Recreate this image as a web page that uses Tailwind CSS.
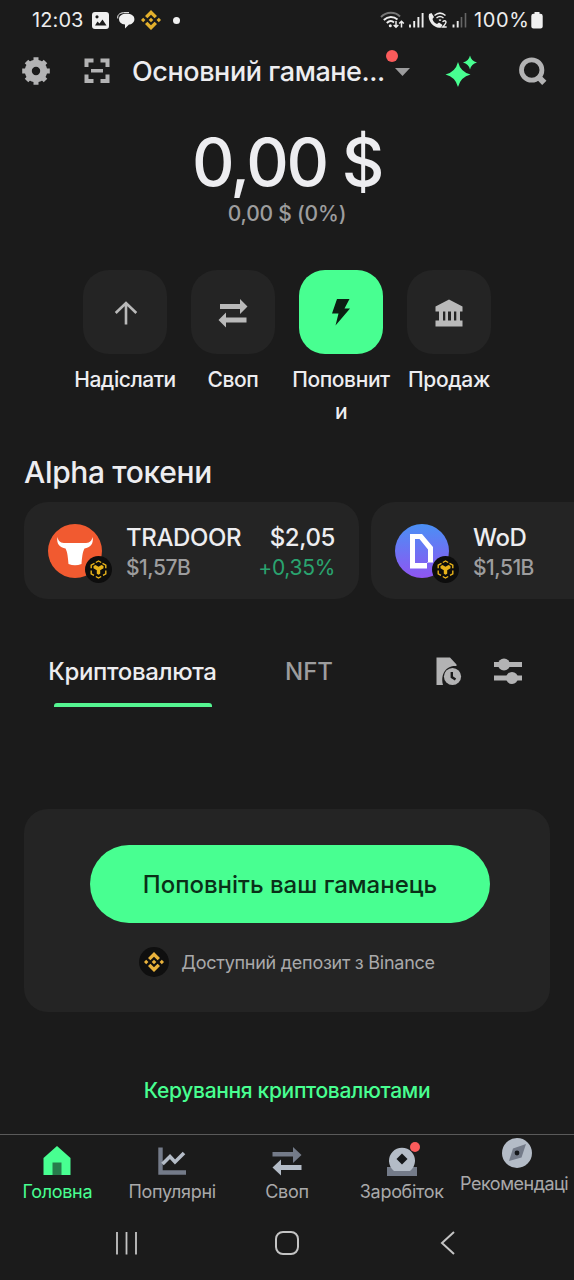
<!DOCTYPE html>
<html lang="uk">
<head>
<meta charset="utf-8">
<title>Гаманець</title>
<script src="https://cdn.jsdelivr.net/npm/@tailwindcss/browser@4"></script>
</head>
<body class="bg-[#1b1b1b]">
<svg class="hidden">
  <defs>
    <symbol id="bnb" viewBox="0 0 20 20"><path d="M10 0L16 6L13.6 8.3L10 4.7L6.4 8.3L4 6ZM10 20L4 14L6.4 11.7L10 15.3L13.6 11.7L16 14ZM0 10L2.2 7.8L4.4 10L2.2 12.2ZM15.6 10L17.8 7.8L20 10L17.8 12.2ZM7.7 10L10 7.7L12.3 10L10 12.3Z" fill="currentColor"/></symbol>
    <symbol id="chain" viewBox="0 0 27 27"><circle cx="13.5" cy="13.5" r="13.5" fill="#0d0d0d"/><g fill="none" stroke="#e8b31a" stroke-width="1.4"><path d="M10.800 6.500L13.500 5L16.200 6.500M17.500 7.300L20.800 9.200V12.200M20.800 14.500V17.800L18 19.400M16.200 20.500L13.500 22L10.800 20.500M9 19.400L6.200 17.800V14.500M6.200 12.200V9.200L9.500 7.300"/></g><path d="M8.500 10L10.500 8.900L13.500 10.700L16.500 8.900L18.500 10V12.300L15.200 14.300V17.800L13.500 18.800L11.800 17.800V14.300L8.500 12.300Z" fill="#e8b31a"/></symbol>
  </defs>
</svg>
<div class="flex h-[1280px] w-[574px] flex-col overflow-hidden bg-[#1b1b1b] font-['Inter',sans-serif] text-[#ededf0]">

  <!-- Status bar -->
  <div class="flex h-10 shrink-0 items-center justify-between pl-8 pr-[30px] text-[20px] text-[#ededed]">
    <div class="flex items-center">
      <span class="w-[60px] tracking-[0.1px]">12:03</span>
      <svg class="h-[17px] w-[17px]" viewBox="0 0 17 17"><path fill-rule="evenodd" fill="#f0f0f0" d="M3 0H14Q17 0 17 3V14Q17 17 14 17H3Q0 17 0 14V3Q0 0 3 0ZM3 13.500H14.500L10.500 7.500L7.500 11.500L5.500 9.500ZM5 3.200A1.600 1.600 0 1 0 5 6.400A1.600 1.600 0 1 0 5 3.200Z"/></svg>
      <svg class="ml-2 h-[17px] w-[18px]" viewBox="0 0 18 17"><path d="M0.800 6.500C0 2 4 0.600 8 0.600H12" fill="none" stroke="#f0f0f0" stroke-width="1"/><path d="M9.500 1.800C14.500 1.800 17.400 3.800 17.400 7.200C17.400 10.500 14.500 12.300 12 12.600L8 16.500V12.600C4 12 2 10 2 7.200C2 3.800 5 1.800 9.500 1.800Z" fill="#f0f0f0"/></svg>
      <svg class="ml-[6px] h-5 w-5 text-[#e3b02c]"><use href="#bnb"/></svg>
      <span class="ml-[12px] h-[7px] w-[7px] rounded-full bg-[#f0f0f0]"></span>
    </div>
    <div class="flex items-center">
      <svg class="h-[18px] w-[88px]" viewBox="0 0 88 18">
        <g fill="none" stroke="#ededed" stroke-width="1.900">
          <path d="M1 6C6.500 0.500 15 0.500 20 5.500" stroke="#777"/>
          <path d="M3.800 9C8 5 13.500 5 17.500 8.500M6.800 12C9.200 9.700 12 9.700 14 11.500"/>
        </g>
        <circle cx="10.300" cy="14.800" r="1.500" fill="#ededed"/>
        <path d="M16 10V16M13.700 14L16 16.300L18.300 14M21.500 16.500V10.500M19.200 12.500L21.500 10.200L23.800 12.500" fill="none" stroke="#ededed" stroke-width="1.500"/>
        <path d="M30 16.500V13.500M34.200 16.500V10M38.400 16.500V6M42.600 16.500V2" stroke="#ededed" stroke-width="1.900"/>
        <path d="M49 3L51.500 2L54 6L52.500 8C53 10.500 55 12.300 57 13L59 11.500L62.500 14L61 16.500C55 18 47 10.500 49 3Z" fill="#ededed"/>
        <path d="M54.500 4.500C58 1.500 62 1.500 65.500 4.500M56.500 7C59 5 61 5 63.500 7M59 9.300Q60 8.500 61 9.300" fill="none" stroke="#ededed" stroke-width="1.500"/>
        <path d="M62.500 10.800Q65.500 8.500 66 11Q66 12.500 62.700 16H66.700" fill="none" stroke="#ededed" stroke-width="1.400"/>
        <path d="M73.500 16.500V13.500M77.700 16.500V10" stroke="#ededed" stroke-width="1.900"/><path d="M81.500 16.500V6M85.500 16.500V2" stroke="#666" stroke-width="1.600"/>
      </svg>
      <span class="ml-[6px] w-[57px] whitespace-nowrap tracking-[0.6px]">100%</span>
      <svg class="mr-px h-[17px] w-[12px]" viewBox="0 0 12 17"><path d="M3.500 0H8.500V1.700H9.500Q11.700 1.700 11.700 4V14.500Q11.700 16.500 9.500 16.500H2.500Q0.300 16.500 0.300 14.500V4Q0.300 1.700 2.500 1.700H3.500Z" fill="#f0f0f0"/></svg>
    </div>
  </div>

  <!-- Wallet header -->
  <header class="flex h-[62px] shrink-0 items-center pl-[22px]">
    <svg class="h-7 w-7" viewBox="0 0 28 28"><circle cx="14" cy="14" r="7.700" fill="none" stroke="#b3b3b4" stroke-width="7"/><path d="M14 0.200V5M14 23V27.800M0.200 14H5M23 14H27.800M4.500 4.500L7.500 7.500M20.500 20.500L23.500 23.500M4.500 23.500L7.500 20.500M20.500 7.500L23.500 4.500" stroke="#b3b3b4" stroke-width="5"/></svg>
    <svg class="ml-[34px] h-[26px] w-[26px]" viewBox="0 0 26 26"><path fill="none" stroke="#b3b3b4" stroke-width="4" d="M9.500 2.500H2.500V9M16.500 2.500H23.500V9M9.500 23H2.500V16.500M16.500 23H23.500V16.500"/><path fill="#b3b3b4" d="M7 11H19V14.500H7Z"/></svg>
    <h1 class="ml-[22px] w-[253px] whitespace-nowrap pt-[2px] text-[27px] font-medium leading-8 tracking-[-0.42px]">Основний гамане...</h1>
    <div class="relative ml-[10px] mt-[2px] h-2 w-[15px]">
      <svg class="h-2 w-[15px]" viewBox="0 0 15 8"><path d="M0 0H15L7.500 8Z" fill="#9c9c9d"/></svg>
      <span class="absolute -left-[9px] -top-[18px] h-3 w-3 rounded-full bg-[#fb5b5b]"></span>
    </div>
    <svg class="ml-[35px] h-8 w-8" viewBox="0 0 32 32"><path fill="#48ff91" d="M13 7Q15.500 17 25.500 19.500Q15.500 22 13 32Q10.500 22 0.500 19.500Q10.500 17 13 7ZM25 0.500Q26.300 6.200 32 7.500Q26.300 8.800 25 14.500Q23.700 8.800 18 7.500Q23.700 6.200 25 0.500Z"/></svg>
    <svg class="ml-[42px] h-7 w-7" viewBox="0 0 28 28"><circle cx="12.700" cy="13" r="10.200" fill="none" stroke="#b3b3b4" stroke-width="4.800"/><path d="M18.500 19L25.300 25.800" stroke="#b3b3b4" stroke-width="6"/></svg>
  </header>

  <!-- Balance -->
  <section class="flex h-[168px] shrink-0 flex-col items-center pt-[28px]">
    <div class="whitespace-nowrap text-[66px] font-medium leading-[64px] tracking-[-2.400px]">0,00 $</div>
    <div class="mt-[8px] whitespace-nowrap text-[21px] font-medium leading-6 tracking-[-0.2px] text-[#9d9d9e]">0,00 $ (0%)</div>
  </section>

  <!-- Actions -->
  <section class="flex h-[170px] shrink-0 justify-center">
    <div class="flex w-[108px] flex-col items-center">
      <div class="flex h-[84px] w-[84px] items-center justify-center rounded-[26px] bg-[#242424]"><svg class="mt-px ml-px h-6 w-6" viewBox="0 0 24 24"><path d="M12 23.500V2M1.700 12L12 2L22.300 12" fill="none" stroke="#b9b9b9" stroke-width="2.600"/></svg></div>
      <span class="mt-[10px] whitespace-nowrap text-[21px] font-medium leading-8 tracking-[-0.45px]">Надіслати</span>
    </div>
    <div class="flex w-[108px] flex-col items-center">
      <div class="flex h-[84px] w-[84px] items-center justify-center rounded-[26px] bg-[#242424]"><svg class="mt-px h-[30px] w-[30px]" viewBox="0 0 30 30"><path d="M2 6H22V1L29.500 8.500L22 16V11H2ZM28.500 19.500H8V14.500L0.500 22L8 29.500V24.500H28.500Z" fill="#b9b9b9"/></svg></div>
      <span class="mt-[10px] whitespace-nowrap text-[21px] font-medium leading-8 tracking-[-0.4px]">Своп</span>
    </div>
    <div class="flex w-[108px] flex-col items-center">
      <div class="flex h-[84px] w-[84px] items-center justify-center rounded-[26px] bg-[#48ff91]"><svg class="h-7 w-[18px]" viewBox="0 0 18 28"><path d="M5 1H17.500L12.500 10.500H18L3.500 27.500L6.500 15.500H0Z" fill="#0b1f12"/></svg></div>
      <span class="mt-[10px] whitespace-nowrap text-center text-[21px] font-medium leading-8 tracking-[-0.4px]">Поповнит<br>и</span>
    </div>
    <div class="flex w-[108px] flex-col items-center">
      <div class="flex h-[84px] w-[84px] items-center justify-center rounded-[26px] bg-[#242424]"><svg class="mt-px h-7 w-7" viewBox="0 0 28 28"><path fill-rule="evenodd" d="M14 0.500L27.500 7.500V12.500H25V21.500H27.500V27.500H0.500V21.500H4V12.500H0.500V7.500ZM8 12.500V21.500H10.300V12.500ZM13 12.500V21.500H16V12.500ZM19 12.500V21.500H21.300V12.500Z" fill="#b9b9b9"/></svg></div>
      <span class="mt-[10px] whitespace-nowrap text-[21px] font-medium leading-8 tracking-[-0.35px]">Продаж</span>
    </div>
  </section>

  <!-- Alpha tokens -->
  <section class="flex h-[159px] shrink-0 flex-col pl-6 pt-[14px]">
    <h2 class="text-[30px] font-medium leading-9 tracking-[-0.35px]">Alpha токени</h2>
    <div class="mt-[12px] flex gap-3">
      <div class="flex h-[97px] w-[335px] shrink-0 items-center rounded-3xl bg-[#242424] pl-6 pr-6">
        <div class="relative h-[54px] w-[54px]">
          <svg class="h-[54px] w-[54px]" viewBox="0 0 54 54"><circle cx="27" cy="27" r="27" fill="#f15a30"/><path d="M9.500 13C10.500 18.500 14 19.500 20 19H34C40 19.500 43.500 18.500 44.500 13C46 20 42 23.500 36.500 24.500C34.500 28 34 34 33.500 40Q27 42.500 20.500 40C20 34 19.500 28 17.500 24.500C12 23.500 8 20 9.500 13Z" fill="#fff"/></svg>
          <svg class="absolute left-[37px] top-[32px] h-[27px] w-[27px]"><use href="#chain"/></svg>
        </div>
        <div class="ml-6 flex flex-col whitespace-nowrap pt-[3px]">
          <span class="text-[24px] font-medium leading-[31px] tracking-[-0.4px]">TRADOOR</span>
          <span class="text-[21px] font-medium leading-[30px] tracking-[-0.5px] text-[#9d9d9e]">$1,57B</span>
        </div>
        <div class="ml-auto flex flex-col items-end whitespace-nowrap pt-[3px]">
          <span class="text-[24px] font-medium leading-[31px] tracking-[-0.4px]">$2,05</span>
          <span class="text-[21px] leading-[30px] tracking-[-0.3px] text-[#2aa470]">+0,35%</span>
        </div>
      </div>
      <div class="flex h-[97px] w-[335px] shrink-0 items-center rounded-3xl bg-[#242424] pl-6 pr-6">
        <div class="relative h-[54px] w-[54px]">
          <svg class="h-[54px] w-[54px]" viewBox="0 0 54 54"><defs><linearGradient id="wod" x1="0" y1="0" x2="0" y2="1"><stop offset="0" stop-color="#4a90f5"/><stop offset="1" stop-color="#8f55f2"/></linearGradient></defs><circle cx="27" cy="27" r="27" fill="url(#wod)"/><path fill-rule="evenodd" d="M15 10H27L38 23V38.500H32V44.500H15ZM20 15V39H32V38H33V25.500L24.500 15Z" fill="#fff"/></svg>
          <svg class="absolute left-[37px] top-[32px] h-[27px] w-[27px]"><use href="#chain"/></svg>
        </div>
        <div class="ml-6 flex flex-col whitespace-nowrap pt-[3px]">
          <span class="text-[24px] font-medium leading-[31px] tracking-[-0.4px]">WoD</span>
          <span class="text-[21px] font-medium leading-[30px] tracking-[-0.5px] text-[#9d9d9e]">$1,51B</span>
        </div>
      </div>
    </div>
  </section>

  <!-- Tabs -->
  <section class="flex h-[210px] shrink-0 items-start pl-[48px] pt-[55px]">
    <div class="flex w-[169px] flex-col items-center">
      <span class="whitespace-nowrap text-[24px] font-medium leading-9 tracking-[-0.35px]">Криптовалюта</span>
      <span class="mt-[13px] h-1 w-[158px] rounded-t-[3px] bg-[#55f591]"></span>
    </div>
    <span class="ml-[68px] w-[48px] text-[24px] font-medium leading-9 text-[#9d9d9e]">NFT</span>
    <svg class="ml-[103px] mt-[3px] h-[29px] w-[26px]" viewBox="0 0 26 29"><path d="M0.500 0.500H14L20.500 7.500V9C12 8 4 15 7 28H0.500Z" fill="#b3b3b4"/><circle cx="16.500" cy="19.500" r="8.600" fill="#b3b3b4"/><path d="M15.800 15V20L19.500 22.500" fill="none" stroke="#1b1b1b" stroke-width="2.400"/></svg>
    <svg class="ml-[32px] mt-[3px] h-[28px] w-[28px]" viewBox="0 0 28 28"><path d="M0 7.500H28M0 21H28" stroke="#b3b3b4" stroke-width="4.800"/><circle cx="10" cy="7.500" r="6" fill="#b3b3b4"/><circle cx="18" cy="21" r="6" fill="#b3b3b4"/></svg>
  </section>

  <!-- Deposit card -->
  <section class="mx-6 flex h-[203px] shrink-0 flex-col items-center rounded-3xl bg-[#242424] pt-9">
    <div class="ml-[6px] flex h-[78px] w-[400px] items-center justify-center whitespace-nowrap rounded-full bg-[#48ff91] pt-[2px] text-[24px] font-medium text-[#0a3018]">Поповніть ваш гаманець</div>
    <div class="mt-[24px] flex h-[30px] items-center">
      <span class="flex h-[30px] w-[30px] items-center justify-center rounded-full bg-[#0f0f0f]"><svg class="h-5 w-5 text-[#e9b23c]"><use href="#bnb"/></svg></span>
      <span class="ml-3 whitespace-nowrap text-[18px] tracking-[-0.26px] text-[#a9a9aa]">Доступний депозит з Binance</span>
    </div>
  </section>

  <div class="flex h-[122px] shrink-0 items-start justify-center pt-[63px]">
    <a class="whitespace-nowrap text-[21px] font-medium leading-8 tracking-[-0.33px] text-[#48ff91]">Керування криптовалютами</a>
  </div>

  <!-- Bottom tabs -->
  <nav class="grid h-[74px] shrink-0 grid-cols-5 border-t border-[#5a5a5a] text-[18px] leading-6 tracking-[-0.3px] text-[#a9a9aa]">
    <div class="flex flex-col items-center pt-[11px] text-[#48ff91]">
      <svg class="h-[30px] w-7" viewBox="0 0 28 30"><path d="M14 0L27.500 12V29H0.500V12Z" fill="#48ff91"/><path d="M9.500 16.500H18.500V29H9.500Z" fill="#267c4b"/></svg>
      <span class="mt-[4px]">Головна</span>
    </div>
    <div class="flex flex-col items-center pt-[11px]">
      <svg class="h-[30px] w-7" viewBox="0 0 28 30"><path d="M2.500 1.500V26.500H28" fill="none" stroke="#747b89" stroke-width="4.400"/><path d="M4.500 18L12 10.500L17 16L26 7" fill="none" stroke="#b4bcc7" stroke-width="3.600"/></svg>
      <span class="mt-[4px]">Популярні</span>
    </div>
    <div class="flex flex-col items-center pt-[11px]">
      <svg class="h-[30px] w-[30px]" viewBox="0 0 30 30"><path d="M0.500 6H21V1L29.500 9L21 17V10.500H0.500Z" fill="#747b89"/><path d="M29.500 19H9V13.500L0.500 21.500L9 29.500V24H29.500Z" fill="#b4bcc7"/></svg>
      <span class="mt-[4px]">Своп</span>
    </div>
    <div class="flex flex-col items-center pt-[11px]">
      <div class="relative h-[30px] w-[30px]">
        <svg class="h-[30px] w-[30px]" viewBox="0 0 30 30"><path d="M0 21H30V30H0Z" fill="#747b89"/><path d="M7 25A13 13 0 1 1 23 25Z" fill="#b4bcc7"/><path d="M15 7.500L20.500 13L15 18.500L9.500 13Z" fill="#15171a"/></svg>
        <span class="absolute -top-[4px] left-[23px] h-[10px] w-[10px] rounded-full bg-[#fb5b5b]"></span>
      </div>
      <span class="mt-[4px]">Заробіток</span>
    </div>
    <div class="flex flex-col items-center pt-[3px]">
      <svg class="h-[30px] w-[30px]" viewBox="0 0 30 30"><circle cx="15" cy="15" r="15" fill="#b4bcc7"/><path d="M24 6L19.500 19.500L7 23L11 10.500Z" fill="#747b89"/><circle cx="15" cy="15" r="2.400" fill="#15171a"/></svg>
      <span class="mt-[4px] w-[115px] shrink-0 whitespace-nowrap pl-[1px] tracking-[-0.5px]">Рекомендаці</span>
    </div>
  </nav>

  <!-- System navigation -->
  <div class="flex h-[72px] shrink-0 items-center pb-[2px] pl-[115px]">
    <svg class="h-6 w-6" viewBox="0 0 24 24"><path d="M2 1V23.500M11.500 1V23.500M21 1V23.500" stroke="#c4c4c4" stroke-width="1.800"/></svg>
    <svg class="ml-[136px] h-6 w-6" viewBox="0 0 24 24"><rect x="1" y="1" width="22" height="22" rx="7" fill="none" stroke="#c4c4c4" stroke-width="2"/></svg>
    <svg class="ml-[141px] h-6 w-4" viewBox="0 0 16 24"><path d="M14 1L2 12L14 23" fill="none" stroke="#c4c4c4" stroke-width="2"/></svg>
  </div>
</div>
</body>
</html>
